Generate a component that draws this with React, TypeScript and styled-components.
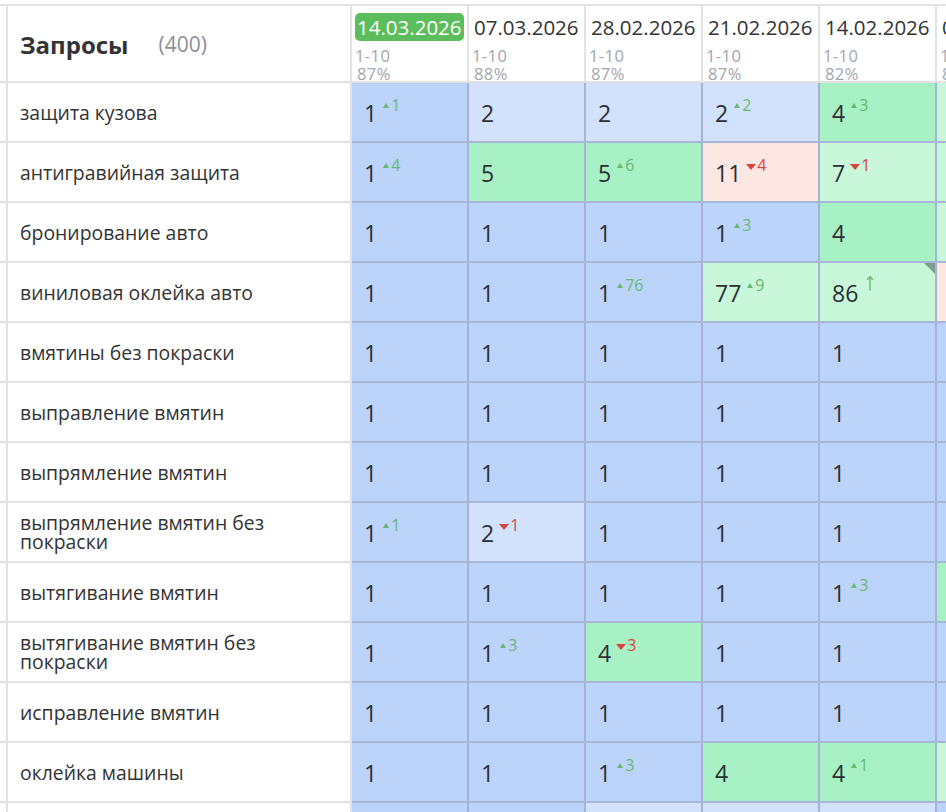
import React from "react";
import styled, { createGlobalStyle } from "styled-components";

const Global = createGlobalStyle`
  html, body { margin: 0; padding: 0; background: #fff; overflow: hidden; }
  body { font-family: "Open Sans", "Noto Sans", sans-serif; color: #333; }
`;

type Kind = "b" | "lb" | "g" | "lg" | "p";
type Delta = { t: "u" | "d" | "a"; v?: number } | null;
type Cell = { n: number; k: Kind; d?: Delta };

const bg: Record<Kind, string> = {
  b: "#bcd3fa",
  lb: "#d2e1fc",
  g: "#a8f1c4",
  lg: "#c8f8d9",
  p: "#fde7e3",
};

const dates = [
  { d: "14.03.2026", r: "1-10", p: "87%", active: true },
  { d: "07.03.2026", r: "1-10", p: "88%" },
  { d: "28.02.2026", r: "1-10", p: "87%" },
  { d: "21.02.2026", r: "1-10", p: "87%" },
  { d: "14.02.2026", r: "1-10", p: "82%" },
  { d: "07.02.2026", r: "1-10", p: "85%" },
];

const c = (n: number, k: Kind, d: Delta = null): Cell => ({ n, k, d });
const u = (v: number): Delta => ({ t: "u", v });
const dn = (v: number): Delta => ({ t: "d", v });

const rows: { q: string; cells: Cell[]; corner?: number }[] = [
  { q: "защита кузова", cells: [c(1, "b", u(1)), c(2, "lb"), c(2, "lb"), c(2, "lb", u(2)), c(4, "g", u(3)), c(7, "lg")] },
  { q: "антигравийная защита", cells: [c(1, "b", u(4)), c(5, "g"), c(5, "g", u(6)), c(11, "p", dn(4)), c(7, "lg", dn(1)), c(6, "lg")] },
  { q: "бронирование авто", cells: [c(1, "b"), c(1, "b"), c(1, "b"), c(1, "b", u(3)), c(4, "g"), c(8, "lg")] },
  { q: "виниловая оклейка авто", cells: [c(1, "b"), c(1, "b"), c(1, "b", u(76)), c(77, "lg", u(9)), c(86, "lg", { t: "a" }), c(90, "p")], corner: 4 },
  { q: "вмятины без покраски", cells: [c(1, "b"), c(1, "b"), c(1, "b"), c(1, "b"), c(1, "b"), c(1, "b")] },
  { q: "выправление вмятин", cells: [c(1, "b"), c(1, "b"), c(1, "b"), c(1, "b"), c(1, "b"), c(1, "b")] },
  { q: "выпрямление вмятин", cells: [c(1, "b"), c(1, "b"), c(1, "b"), c(1, "b"), c(1, "b"), c(1, "b")] },
  { q: "выпрямление вмятин без покраски", cells: [c(1, "b", u(1)), c(2, "lb", dn(1)), c(1, "b"), c(1, "b"), c(1, "b"), c(1, "b")] },
  { q: "вытягивание вмятин", cells: [c(1, "b"), c(1, "b"), c(1, "b"), c(1, "b"), c(1, "b", u(3)), c(4, "g")] },
  { q: "вытягивание вмятин без покраски", cells: [c(1, "b"), c(1, "b", u(3)), c(4, "g", dn(3)), c(1, "b"), c(1, "b"), c(1, "b")] },
  { q: "исправление вмятин", cells: [c(1, "b"), c(1, "b"), c(1, "b"), c(1, "b"), c(1, "b"), c(1, "b")] },
  { q: "оклейка машины", cells: [c(1, "b"), c(1, "b"), c(1, "b", u(3)), c(4, "g"), c(4, "g", u(1)), c(5, "lg")] },
  { q: "оклейка авто пленкой", cells: [c(1, "b"), c(1, "b"), c(2, "lb"), c(2, "lb"), c(2, "lb"), c(1, "b")] },
];

const Table = styled.div`
  display: flex;
  flex-direction: column;
  width: 1060px;
  padding-top: 4px;
`;

const Row = styled.div<{ $head?: boolean }>`
  display: flex;
  height: ${(p) => (p.$head ? "79px" : "60px")};
  ${(p) => (p.$head ? "border-top: 2px solid #e4e4e4;" : "")}
  box-sizing: border-box;
`;

const Stub = styled.div`
  width: 8px;
  flex: none;
  box-sizing: border-box;
  border-right: 2px solid #e2e2e2;
  border-bottom: 2px solid #e2e2e2;
`;

const QueryHead = styled.div`
  width: 344px;
  flex: none;
  box-sizing: border-box;
  border-right: 2px solid #e2e2e2;
  border-bottom: 2px solid #e2e2e2;
  display: flex;
  align-items: center;
  padding-left: 12px;
  padding-top: 1px;
`;

const Title = styled.span`
  font-size: 24px;
  font-weight: 700;
  color: #333;
`;

const Count = styled.span`
  font-size: 21px;
  color: #8c8f96;
  margin-left: 30px;
`;

const Query = styled.div`
  width: 344px;
  flex: none;
  box-sizing: border-box;
  border-right: 2px solid #e2e2e2;
  border-bottom: 2px solid #e2e2e2;
  display: flex;
  align-items: center;
  padding: 0 40px 0 12px;
  font-size: 19.4px;
  line-height: 19px;
  color: #333;
`;

const DateHead = styled.div`
  width: 117px;
  flex: none;
  box-sizing: border-box;
  border-right: 2px solid #e2e2e2;
  border-bottom: 2px solid #e2e2e2;
  display: flex;
  flex-direction: column;
  align-items: flex-start;
  padding: 7px 0 0 3px;
  white-space: nowrap;
`;

const DateText = styled.span<{ $active?: boolean }>`
  font-size: 20.5px;
  line-height: 28px;
  height: 28px;
  padding: 0 2px;
  border-radius: 5px;
  color: ${(p) => (p.$active ? "#fff" : "#333")};
  background: ${(p) => (p.$active ? "#5cbd5c" : "transparent")};
`;

const Sub = styled.span<{ $first?: boolean }>`
  font-size: 16.5px;
  letter-spacing: 0.4px;
  line-height: 18px;
  color: #a2a5ab;
  padding-left: ${(p) => (p.$first ? "0" : "2px")};
  margin-top: ${(p) => (p.$first ? "6px" : "0")};
`;

const Pos = styled.div<{ $k: Kind }>`
  position: relative;
  width: 117px;
  flex: none;
  box-sizing: border-box;
  background: ${(p) => bg[p.$k]};
  border-right: 2px solid #a5b3d6;
  border-bottom: 2px solid #a8b6d8;
  display: flex;
  align-items: center;
  padding-left: 12px;
  padding-top: 2px;
`;

const Num = styled.span`
  font-size: 23px;
  color: #2b2f36;
  line-height: 26px;
`;

const Delta = styled.span<{ $down?: boolean }>`
  align-self: flex-start;
  margin-top: 12px;
  margin-left: 4px;
  display: inline-flex;
  align-items: flex-start;
  font-size: 16px;
  line-height: 16px;
  color: ${(p) => (p.$down ? "#d9453d" : "#69b870")};
`;

const UpTri = styled.span`
  width: 0;
  height: 0;
  margin: 6px 2px 0 2px;
  border-left: 3px solid transparent;
  border-right: 3px solid transparent;
  border-bottom: 5px solid #69b870;
`;

const DownTri = styled.span`
  width: 0;
  height: 0;
  margin: 7px 1px 0 1px;
  border-left: 5px solid transparent;
  border-right: 5px solid transparent;
  border-top: 6px solid #d9453d;
`;

const Corner = styled.span`
  position: absolute;
  top: 0;
  right: 0;
  width: 0;
  height: 0;
  border-left: 11px solid transparent;
  border-top: 11px solid #7f9e92;
`;

const Arrow = styled.svg`
  margin-left: 4px;
  margin-top: -2px;
`;

function DeltaView({ d }: { d: Delta }) {
  if (!d) return null;
  if (d.t === "a")
    return (
      <Delta>
        <Arrow width="8" height="16" viewBox="0 0 8 16">
          <path d="M4 15.5 V1.5 M1.2 4.8 L4 1.5 L6.8 4.8" stroke="#69b870" strokeWidth="1.4" fill="none" />
        </Arrow>
      </Delta>
    );
  if (d.t === "u")
    return (
      <Delta>
        <UpTri />
        {d.v}
      </Delta>
    );
  return (
    <Delta $down>
      <DownTri />
      {d.v}
    </Delta>
  );
}

export default function App() {
  return (
    <>
      <Global />
      <Table>
        <Row $head>
          <Stub />
          <QueryHead>
            <Title>Запросы</Title>
            <Count>(400)</Count>
          </QueryHead>
          {dates.map((d) => (
            <DateHead key={d.d}>
              <DateText $active={d.active}>{d.d}</DateText>
              <Sub $first>{d.r}</Sub>
              <Sub>{d.p}</Sub>
            </DateHead>
          ))}
        </Row>
        {rows.map((r) => (
          <Row key={r.q}>
            <Stub />
            <Query>{r.q}</Query>
            {r.cells.map((cell, i) => (
              <Pos key={i} $k={cell.k}>
                <Num>{cell.n}</Num>
                <DeltaView d={cell.d ?? null} />
                {r.corner === i && <Corner />}
              </Pos>
            ))}
          </Row>
        ))}
      </Table>
    </>
  );
}
